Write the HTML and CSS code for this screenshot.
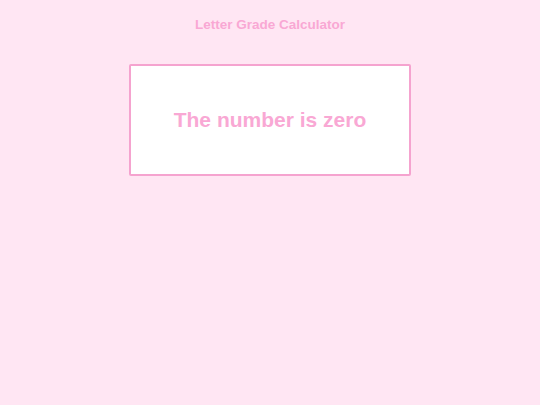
FILE: index.html
```html
<!DOCTYPE html>
<html lang="en">
<head>
<meta charset="UTF-8">
<meta name="viewport" content="width=device-width, initial-scale=1.0">
<title>Letter Grade Calculator</title>
<link rel="stylesheet" href="styles.css">
</head>
<body>
<div class="app">
  <h1 class="title">Letter Grade Calculator</h1>
  <div class="result">
    <p>The number is zero</p>
  </div>
</div>
</body>
</html>
```

FILE: styles.css
```css
* {
  margin: 0;
  padding: 0;
  box-sizing: border-box;
}

body {
  width: 100vw;
  height: 100vh;
  background: #ffe6f3;
  font-family: "Liberation Sans", Arial, sans-serif;
  overflow: hidden;
}

.app {
  display: flex;
  flex-direction: column;
  align-items: center;
  padding-top: 17px;
}

.title {
  font-size: 13.5px;
  font-weight: bold;
  color: #f9a8d4;
  line-height: 16px;
}

/* Result card */
.result {
  margin-top: 31px;
  width: 282px;
  height: 112px;
  background: #fff;
  border: 2px solid #f5a3cf;
  border-radius: 2px;
  display: flex;
  align-items: center;
  justify-content: center;
}

.result p {
  font-size: 21px;
  font-weight: bold;
  color: #f9a8d4;
}
```
